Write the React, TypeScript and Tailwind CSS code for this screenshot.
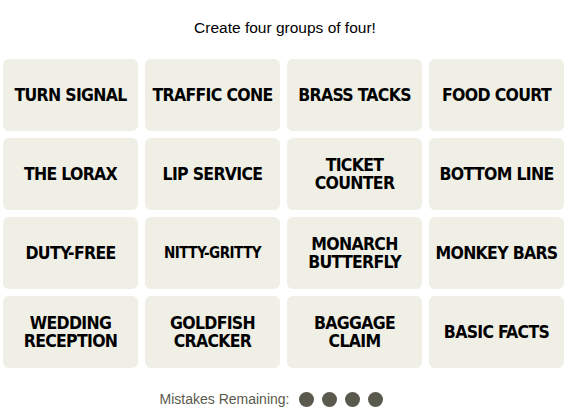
import React from "react";

const words: string[][] = [
  ["TURN SIGNAL", "TRAFFIC CONE", "BRASS TACKS", "FOOD COURT"],
  ["THE LORAX", "LIP SERVICE", "TICKET COUNTER", "BOTTOM LINE"],
  ["DUTY-FREE", "NITTY-GRITTY", "MONARCH BUTTERFLY", "MONKEY BARS"],
  ["WEDDING RECEPTION", "GOLDFISH CRACKER", "BAGGAGE CLAIM", "BASIC FACTS"],
];

const twoLine = new Set(["TICKET COUNTER", "MONARCH BUTTERFLY", "WEDDING RECEPTION", "GOLDFISH CRACKER", "BAGGAGE CLAIM"]);

function Tile({ word }: { word: string }) {
  const small = word === "NITTY-GRITTY";
  return (
    <button
      className={`h-[72px] rounded-md bg-[#efefe6] flex items-center justify-center text-center text-black font-bold uppercase leading-[18px] px-1 ${
        small ? "text-[15px] tracking-[-0.5px]" : "text-[17.5px] tracking-[-0.7px]"
      }`}
      style={{ fontFamily: '"DejaVu Sans Condensed", "Liberation Sans", sans-serif' }}
    >
      {twoLine.has(word) ? (
        <span>
          {word.split(" ")[0]}
          <br />
          {word.split(" ")[1]}
        </span>
      ) : (
        <span className="whitespace-nowrap">{word}</span>
      )}
    </button>
  );
}

export default function App() {
  return (
    <div className="w-[570px] h-[413px] bg-white" style={{ fontFamily: '"Liberation Sans", Arial, sans-serif' }}>
      <p className="pt-[19px] h-[59px] text-center text-[15.5px] text-black leading-[18px]">
        Create four groups of four!
      </p>
      <div className="ml-[3px] w-[561px] grid grid-cols-4 gap-[7px]">
        {words.flat().map((w) => (
          <Tile key={w} word={w} />
        ))}
      </div>
      <div className="mt-[21px] flex items-center justify-center gap-[8px] pr-[27px]">
        <span className="text-[14px] text-[#5a594e] mr-[2px]">Mistakes Remaining:</span>
        {[0, 1, 2, 3].map((i) => (
          <span key={i} className="w-[15px] h-[15px] rounded-full bg-[#5a594e]" />
        ))}
      </div>
    </div>
  );
}
